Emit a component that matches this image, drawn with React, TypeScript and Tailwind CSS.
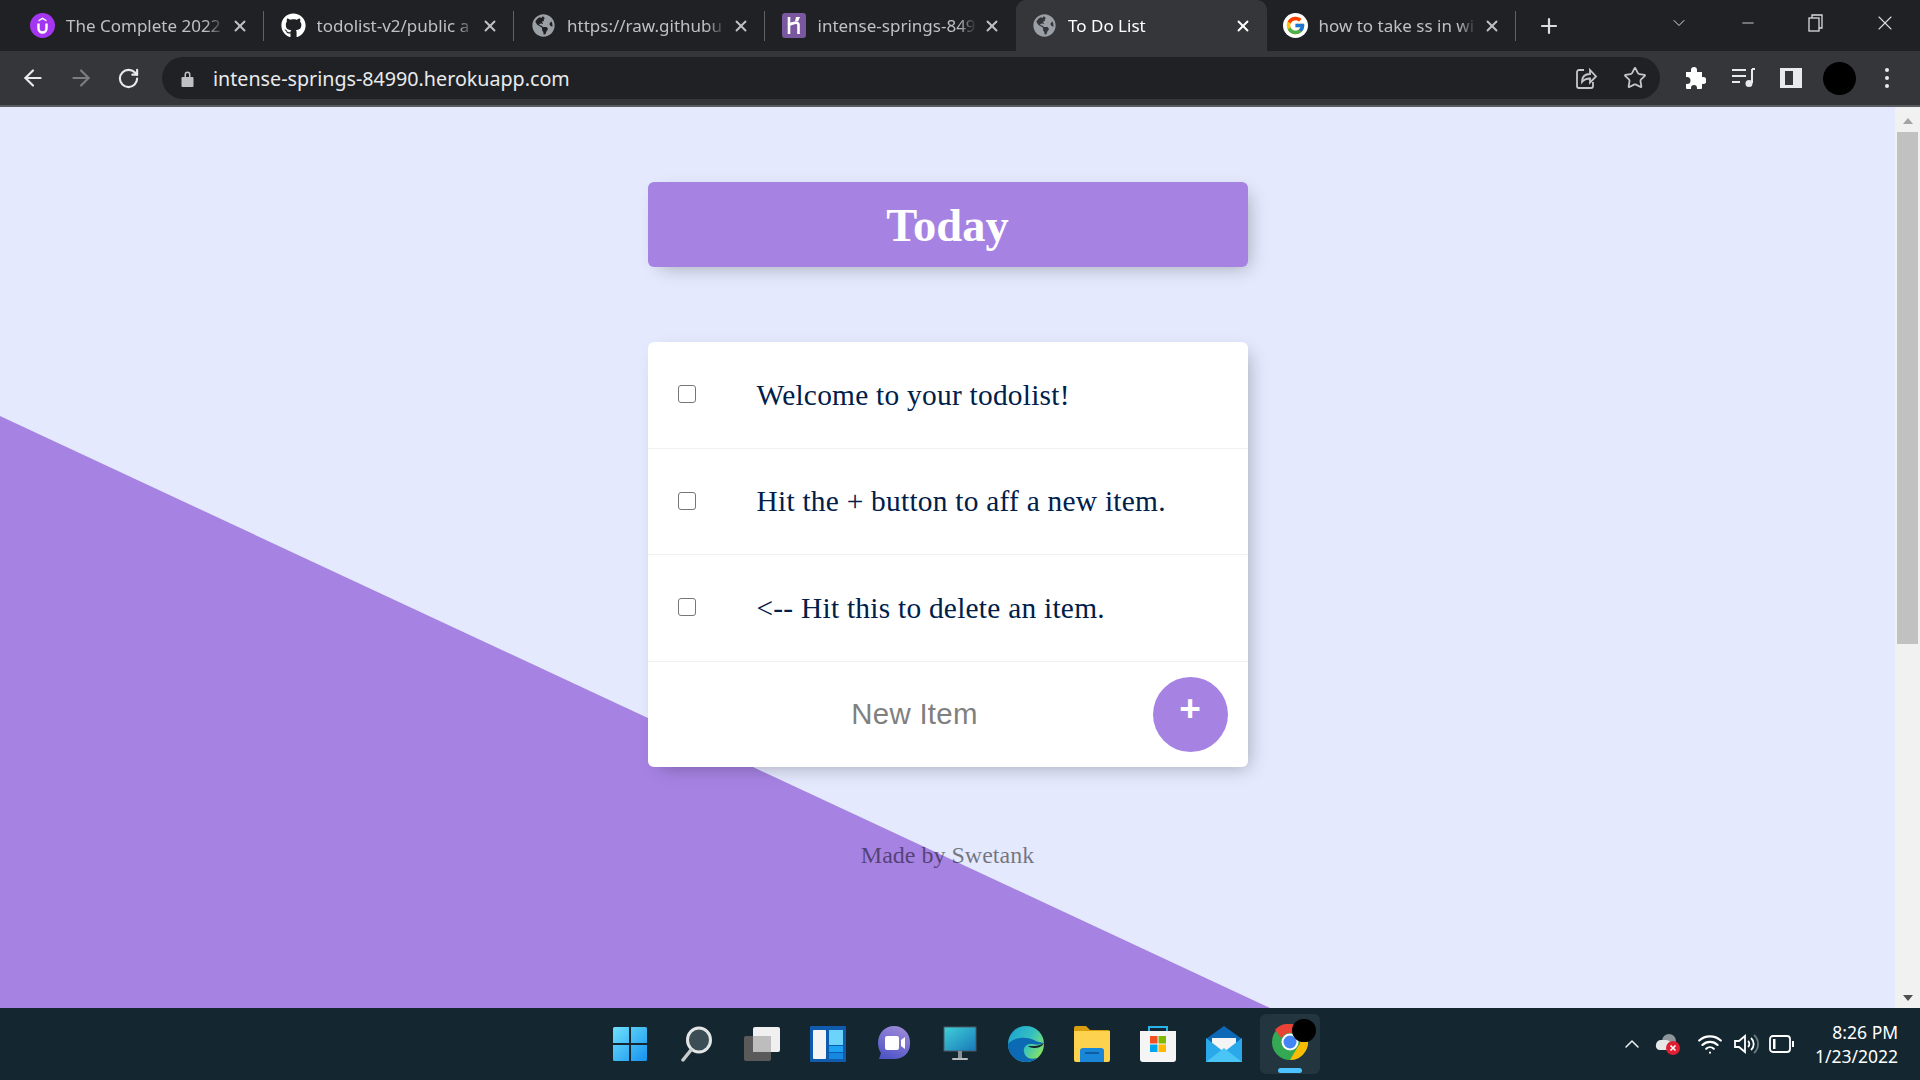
import { ArrowLeft, ArrowRight, ChevronDown, ChevronUp, Minus, Plus, RotateCw, Star, Wifi, X } from "lucide-react";
import { FaGithub, FaGlobeAmericas } from "react-icons/fa";
import { FcGoogle } from "react-icons/fc";
import type { ReactNode } from "react";

const uiFont = "font-['Noto_Sans','Open_Sans',sans-serif]";
const serif = "font-['Liberation_Serif','Times_New_Roman',serif]";

function UdemyIcon() {
  return (
    <svg width="25" height="25" viewBox="0 0 25 25">
      <circle cx="12.5" cy="12.5" r="12.5" fill="#a435f0" />
      <path d="M8.5 10.5v5a4 4 0 0 0 8 0v-5" fill="none" stroke="#fff" strokeWidth="2.4" />
      <path d="M12.5 4.5l4 2.4v1.6l-4-2.3-4 2.3V6.9z" fill="#fff" />
    </svg>
  );
}

function HerokuIcon() {
  return (
    <svg width="24" height="25" viewBox="0 0 24 25">
      <rect width="24" height="25" rx="3" fill="#79589f" />
      <path d="M7 4v17M7 12c3-2 9-3.5 9.500-.5V21" fill="none" stroke="#fff" strokeWidth="2.600" />
      <path d="M14 4h4l-2 4.500h-3z" fill="#fff" />
    </svg>
  );
}

const tabs: { title: string; icon: ReactNode; active?: boolean }[] = [
  { title: "The Complete 2022", icon: <UdemyIcon /> },
  { title: "todolist-v2/public a", icon: <FaGithub size={25} className="text-white" /> },
  { title: "https://raw.githubu", icon: <FaGlobeAmericas size={23} className="text-[#9aa0a6]" /> },
  { title: "intense-springs-849", icon: <HerokuIcon /> },
  { title: "To Do List", icon: <FaGlobeAmericas size={23} className="text-[#9aa0a6]" />, active: true },
  { title: "how to take ss in wi", icon: <span className="flex h-[25px] w-[25px] items-center justify-center rounded-full bg-white"><FcGoogle size={21} /></span> },
];

function TabBar() {
  return (
    <div className={`flex h-[51px] items-center bg-[#202124] pl-[14px] ${uiFont}`}>
      {tabs.map((tab, i) => (
        <div
          key={tab.title}
          className={`flex h-[51px] w-[250.5px] shrink-0 items-center pl-[16px] pr-[15px] ${
            tab.active ? "rounded-t-[10px] bg-[#35363a] text-white" : "text-[#bdc1c6]"
          }`}
        >
          <span className="flex w-[25px] shrink-0 justify-center">{tab.icon}</span>
          <span className="ml-[11px] flex-1 overflow-hidden whitespace-nowrap text-[17px] [mask-image:linear-gradient(to_right,black_88%,transparent_100%)]">
            {tab.title}
          </span>
          <X size={18} strokeWidth={2.5} className="ml-[6px] shrink-0" />
          {i !== 3 && !tab.active && (
            <span className="ml-[14px] mr-[-14px] h-[30px] w-px shrink-0 bg-[#5f6368]" />
          )}
        </div>
      ))}
      <Plus size={24} strokeWidth={2.2} className="ml-[20px] text-[#dadce0]" />
      <div className="ml-auto flex items-center text-[#dadce0]">
        <ChevronDown size={20} strokeWidth={1.2} className="mb-[6px]" />
        <Minus size={18} strokeWidth={1.2} className="mb-[6px] ml-[50px]" />
        <svg width="16" height="18" viewBox="0 0 16 18" className="mb-[6px] ml-[51px]" fill="none" stroke="currentColor" strokeWidth="1.300">
          <rect x="1" y="4" width="10" height="13" />
          <path d="M4 4V1h10v13h-3" />
        </svg>
        <X size={24} strokeWidth={1.1} className="mb-[6px] ml-[49px] mr-[23px]" />
      </div>
    </div>
  );
}

function ToolBar() {
  return (
    <div className={`flex h-[56px] items-center border-b-2 border-[#5a5b5f] bg-[#35363a] ${uiFont}`}>
      <ArrowLeft size={26} strokeWidth={2} className="ml-[20px] text-[#e8eaed]" />
      <ArrowRight size={26} strokeWidth={2} className="ml-[22px] text-[#7b7d80]" />
      <RotateCw size={23} strokeWidth={2.2} className="ml-[23px] text-[#e8eaed]" />
      <div className="ml-[22px] flex h-[42px] w-[1498px] items-center rounded-full bg-[#202124] pl-[19px] pr-[13px]">
        <svg width="13" height="17" viewBox="0 0 13 17" fill="#bdc1c6">
          <path d="M1.500 7h10a1 1 0 0 1 1 1v8a1 1 0 0 1-1 1h-10a1 1 0 0 1-1-1V8a1 1 0 0 1 1-1zM3.500 7V4.500a3 3 0 0 1 6 0V7H8V4.500a1.500 1.500 0 0 0-3 0V7z" />
        </svg>
        <span className="ml-[19px] mt-[2px] text-[19.700px] leading-none text-[#e8eaed]">intense-springs-84990.herokuapp.com</span>
        <svg width="24" height="24" viewBox="0 0 24 24" className="ml-auto" fill="none" stroke="#c4c7c9" strokeWidth="1.800">
          <path d="M10 4H5a2 2 0 0 0-2 2v14a2 2 0 0 0 2 2h12a2 2 0 0 0 2-2v-4" />
          <path d="M8 16c0-5 3-8 8-8V4l6 6.500-6 6v-4c-3 0-6 1-8 3.500z" />
        </svg>
        <Star size={24} strokeWidth={1.800} className="ml-[25px] text-[#c4c7c9]" />
      </div>
      <svg width="22" height="24" viewBox="0 0 22 24" className="ml-[24px]" fill="#fff">
        <path d="M2 6h5V4a3 3 0 0 1 6 0v2h5v5h1a3.500 3.500 0 0 1 0 7h-1v4a1 1 0 0 1-1 1h-4v-1a3 3 0 0 0-6 0v1H3a1 1 0 0 1-1-1v-4h1a3.500 3.500 0 0 0 0-7H2z" />
      </svg>
      <svg width="24" height="20" viewBox="0 0 24 20" className="ml-[25px]" fill="none" stroke="#e8eaed" strokeWidth="2">
        <path d="M1 2h14M1 8h14M1 14h8M21 1v14" />
        <circle cx="18" cy="15.500" r="2.500" fill="#e8eaed" />
        <path d="M21 1h3" />
      </svg>
      <svg width="22" height="20" viewBox="0 0 22 20" className="ml-[25px]">
        <path fillRule="evenodd" d="M0 0h22v20H0zM5 3v14h12V3z" fill="#e8eaed" />
        <rect x="13" y="3" width="4" height="14" fill="#e8eaed" />
      </svg>
      <span className="ml-[21px] h-[33px] w-[33px] rounded-full bg-black" />
      <span className="ml-[29px] flex flex-col gap-[4px]">
        <span className="h-[4px] w-[4px] rounded-full bg-[#e8eaed]" />
        <span className="h-[4px] w-[4px] rounded-full bg-[#e8eaed]" />
        <span className="h-[4px] w-[4px] rounded-full bg-[#e8eaed]" />
      </span>
    </div>
  );
}

const items = ["Welcome to your todolist!", "Hit the + button to aff a new item.", "<-- Hit this to delete an item."];

function TodoPage() {
  return (
    <main className={`relative flex-1 overflow-hidden bg-[#e4e9fd] ${serif}`}>
      <div className="absolute inset-0 bg-[#a683e3] [clip-path:polygon(0_309px,1270px_901px,0_901px)]" />
      <div className="relative mx-auto flex w-[600px] flex-col pt-[75px]">
        <div className="flex h-[85px] items-center justify-center rounded-[6px] bg-[#a683e3] pt-[2px] shadow-[6px_6px_18px_-6px_rgba(0,0,0,0.3)]">
          <h1 className="text-[46.500px] font-bold text-white">Today</h1>
        </div>
        <div className="mt-[75px] rounded-[6px] bg-white shadow-[6px_6px_18px_-6px_rgba(0,0,0,0.3)]">
          {items.map((item) => (
            <div key={item} className="flex h-[106.500px] items-center border-b border-[#f1f1f1] pl-[30px]">
              <input type="checkbox" className="mb-[1px] h-[18px] w-[18px] appearance-none rounded-[3px] border-[1.500px] border-[#767676] bg-white" />
              <p className="ml-[61px] text-[29.400px] tracking-[0.25px] text-[#00204a]">{item}</p>
            </div>
          ))}
          <div className="flex h-[105px] items-center pl-[34px]">
            <input
              placeholder="New Item"
              className="w-[466px] bg-transparent text-center font-['Liberation_Sans',Arial,sans-serif] text-[29.400px] tracking-[0.3px] outline-none placeholder:text-[#808080]"
            />
            <button className="ml-[5px] flex h-[75px] w-[75px] items-center justify-center rounded-full bg-[#a683e3] pb-[11px] font-['Liberation_Sans',Arial,sans-serif] text-[37px] font-bold leading-none text-white">
              +
            </button>
          </div>
        </div>
        <footer className="mt-[73px] text-center text-[24px] leading-[30px] text-[rgba(0,0,0,0.5)]">Made by Swetank</footer>
      </div>
    </main>
  );
}

function ScrollBar() {
  return (
    <div className="flex w-[25px] flex-col items-center bg-[#f1f1f1] pt-[11px]">
      <span className="h-0 w-0 border-x-[5px] border-b-[6px] border-x-transparent border-b-[#a3a3a3]" />
      <span className="mt-[8px] h-[512px] w-[21px] bg-[#c1c1c1]" />
      <span className="mb-[7px] mt-auto h-0 w-0 border-x-[5px] border-t-[6px] border-x-transparent border-t-[#505050]" />
    </div>
  );
}

function TaskbarIcons() {
  return (
    <>
      <svg width="36" height="36" viewBox="0 0 36 36">
        <defs>
          <linearGradient id="win" x1="0" y1="0" x2="1" y2="1">
            <stop offset="0" stopColor="#6fe0fb" />
            <stop offset="1" stopColor="#1593ee" />
          </linearGradient>
        </defs>
        <path d="M1 2.500A1.500 1.500 0 0 1 2.500 1H17v16H1zM19 1h14.500A1.500 1.500 0 0 1 35 2.500V17H19zM1 19h16v16H2.500A1.500 1.500 0 0 1 1 33.500zM19 19h16v14.500a1.500 1.500 0 0 1-1.500 1.500H19z" fill="url(#win)" />
      </svg>
      <svg width="36" height="36" viewBox="0 0 36 36">
        <ellipse cx="21" cy="14" rx="11.500" ry="12" fill="#3b4d55" stroke="#e4e6e6" strokeWidth="3" />
        <path d="M13 24L5 34" stroke="#c9cccc" strokeWidth="3.500" strokeLinecap="round" />
      </svg>
      <svg width="36" height="36" viewBox="0 0 36 36">
        <rect x="0" y="10" width="27" height="25" rx="2" fill="#5a5a5a" />
        <rect x="9" y="1" width="27" height="25" rx="2" fill="#f0f0f0" />
        <rect x="9" y="10" width="18" height="16" fill="#bdbdbd" />
      </svg>
      <svg width="36" height="36" viewBox="0 0 36 36">
        <rect width="36" height="36" rx="1" fill="#0f5cae" />
        <rect x="3" y="4" width="13" height="29" rx="1" fill="#f4f4f4" />
        <rect x="19" y="4" width="14" height="15" fill="#6cd3fb" />
        <rect x="19" y="20" width="14" height="6" fill="#1da1f2" />
        <rect x="19" y="27" width="14" height="6" fill="#1688e0" />
      </svg>
      <svg width="36" height="36" viewBox="0 0 36 36">
        <defs>
          <linearGradient id="chat" x1="0.700" y1="0" x2="0.300" y2="1">
            <stop offset="0" stopColor="#9d8ad8" />
            <stop offset="1" stopColor="#4f55c6" />
          </linearGradient>
        </defs>
        <path d="M18 0c9 0 16 7 16 16v2c0 9-7 15-16 15H3l2-6c-2-3-3-6-3-10C2 7 9 0 18 0z" fill="url(#chat)" />
        <rect x="9" y="10" width="14" height="14" rx="2" fill="#fff" />
        <path d="M25 14l4-3v12l-4-3z" fill="#fff" />
      </svg>
      <svg width="36" height="36" viewBox="0 0 36 36">
        <defs>
          <linearGradient id="mon" x1="0" y1="0" x2="1" y2="1">
            <stop offset="0" stopColor="#40d0d8" />
            <stop offset="1" stopColor="#1878b8" />
          </linearGradient>
        </defs>
        <rect x="2" y="1" width="32" height="24" fill="url(#mon)" stroke="#4a5a62" strokeWidth="1" />
        <rect x="16" y="25" width="4" height="7" fill="#8a9299" />
        <rect x="10" y="32" width="16" height="2" rx="1" fill="#b8bcbf" />
      </svg>
      <svg width="36" height="36" viewBox="0 0 36 36">
        <defs>
          <linearGradient id="edge" x1="0" y1="0" x2="1" y2="0.600">
            <stop offset="0" stopColor="#1a9fd6" />
            <stop offset="0.600" stopColor="#35c1c0" />
            <stop offset="1" stopColor="#7fe06a" />
          </linearGradient>
        </defs>
        <circle cx="18" cy="18" r="18" fill="url(#edge)" />
        <path d="M0 18c0 10 8 18 18 18 4 0 8-1 11-4-8 2-12-1-13-6-1-4 2-8 6-8 5 0 7 2 14-1-3-1-7-1-10-3C18 11 8 10 0 18z" fill="#0c6ab5" />
        <path d="M20 20c4 0 10 1 16-3-2 4-6 5-10 5-2 0-5-1-6-2z" fill="#14252f" />
      </svg>
      <svg width="36" height="36" viewBox="0 0 36 36">
        <path d="M0 2a2 2 0 0 1 2-2h10l4 4h18a2 2 0 0 1 2 2v4H0z" fill="#d99e0e" />
        <path d="M0 5h36v29a2 2 0 0 1-2 2H2a2 2 0 0 1-2-2z" fill="#fcd24f" />
        <path d="M6 36V25a3 3 0 0 1 3-3h18a3 3 0 0 1 3 3v11z" fill="#1a86d8" />
        <rect x="11" y="26" width="14" height="2" fill="#0b5ea5" />
      </svg>
      <svg width="36" height="36" viewBox="0 0 36 36">
        <path d="M9 7V1h18v6" fill="none" stroke="#28b4ea" strokeWidth="2" />
        <path d="M0 5h36v28a3 3 0 0 1-3 3H3a3 3 0 0 1-3-3z" fill="#f5f5f5" />
        <rect x="10" y="10" width="7.500" height="7.500" fill="#f25022" />
        <rect x="18.500" y="10" width="7.500" height="7.500" fill="#7fba00" />
        <rect x="10" y="18.500" width="7.500" height="7.500" fill="#00a4ef" />
        <rect x="18.500" y="18.500" width="7.500" height="7.500" fill="#ffb900" />
      </svg>
      <svg width="36" height="36" viewBox="0 0 36 36">
        <path d="M0 13L18 0l18 13v4H0z" fill="#0e68b8" />
        <path d="M6 12h24v12H6z" fill="#f4f4f4" />
        <path d="M0 12l18 14 18-14v24H0z" fill="#2aa8ea" />
        <path d="M0 36l18-14 18 14z" fill="#49c6f5" />
      </svg>
    </>
  );
}

function ChromeTask() {
  return (
    <span className="relative flex h-[60px] w-[60px] items-center justify-center rounded-[6px] bg-[#233640]">
      <svg width="36" height="36" viewBox="0 0 36 36" className="mb-[4px]">
        <circle cx="18" cy="18" r="18" fill="#34a853" />
        <path d="M18 0a18 18 0 0 1 15.600 9H18a9 9 0 0 0-8.400 5.500L3 5.800A18 18 0 0 1 18 0z" fill="#ea4335" />
        <path d="M33.600 9A18 18 0 0 1 18 36l8-13.500A9 9 0 0 0 25 9z" fill="#fbbc04" />
        <circle cx="18" cy="18" r="8.500" fill="#fff" />
        <circle cx="18" cy="18" r="6.500" fill="#4285f4" />
      </svg>
      <span className="absolute right-[4px] top-[5px] h-[23px] w-[24px] rounded-full bg-black" />
      <span className="absolute bottom-[1px] h-[5px] w-[24px] rounded-full bg-[#4cc2ff]" />
    </span>
  );
}

function TaskBar() {
  return (
    <div className={`flex h-[72px] items-center bg-[#14262f] pl-[612px] text-white ${uiFont}`}>
      <div className="flex items-center gap-[30px]">
        <TaskbarIcons />
      </div>
      <div className="ml-[18px]">
        <ChromeTask />
      </div>
      <div className="ml-[300px] flex items-center">
        <ChevronUp size={24} strokeWidth={1.500} className="text-[#f0f0f0]" />
        <svg width="26" height="24" viewBox="0 0 26 24" className="ml-[11px]">
          <circle cx="14" cy="9" r="7" fill="#8d979b" />
          <path d="M1 13a5 5 0 0 1 5-5h5a6 6 0 0 1 6 6 4 4 0 0 1-4 4H5a4 4 0 0 1-4-5z" fill="#e6e8e8" />
          <circle cx="18" cy="16" r="7" fill="#e01f33" />
          <path d="M15.500 13.500l5 5m0-5l-5 5" stroke="#fff" strokeWidth="1.600" />
        </svg>
        <Wifi size={26} strokeWidth={2} className="ml-[16px]" />
        <svg width="26" height="24" viewBox="0 0 26 24" className="ml-[10px]" fill="none" stroke="#fff" strokeWidth="1.800">
          <path d="M2 9h4l6-5v16l-6-5H2z" />
          <path d="M15 9a4 4 0 0 1 0 6M18 6a8 8 0 0 1 0 12" />
          <path d="M21 3a12 12 0 0 1 0 18" stroke="#6a7a82" />
        </svg>
        <svg width="26" height="18" viewBox="0 0 26 18" className="ml-[10px]" fill="none" stroke="#fff" strokeWidth="1.800">
          <rect x="1" y="1" width="20" height="16" rx="3" />
          <rect x="4" y="4" width="2.500" height="10" fill="#fff" stroke="none" />
          <path d="M23 6h2v6h-2z" fill="#fff" stroke="none" />
        </svg>
        <div className="ml-[20px] mr-[22px] flex flex-col items-end text-[17.500px] leading-[24px]">
          <span>8:26 PM</span>
          <span>1/23/2022</span>
        </div>
      </div>
    </div>
  );
}

export default function App() {
  return (
    <div className="flex h-[1080px] w-[1920px] flex-col overflow-hidden">
      <TabBar />
      <ToolBar />
      <div className="flex min-h-0 flex-1">
        <TodoPage />
        <ScrollBar />
      </div>
      <TaskBar />
    </div>
  );
}
